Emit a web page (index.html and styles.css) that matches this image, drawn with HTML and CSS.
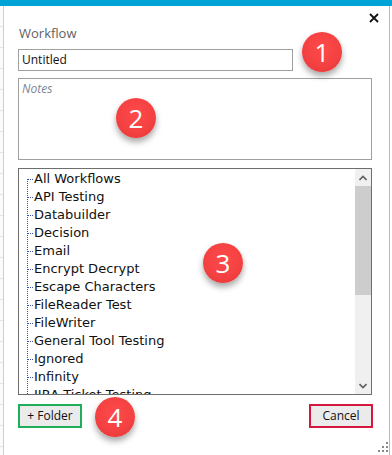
FILE: index.html
```html
<!DOCTYPE html>
<html>
<head>
<meta charset="utf-8">
<link rel="stylesheet" href="styles.css">
</head>
<body>
<div class="screen">
  <div class="topbar"></div>
  <div class="main">
    <div class="gutter"></div>
    <div class="dialog">
      <div class="titlebar">
        <span class="close" aria-label="Close">
          <svg width="10" height="10" viewBox="0 0 10 10"><path d="M1 1 L9 9 M9 1 L1 9" stroke="#111" stroke-width="1.8" fill="none"/></svg>
        </span>
      </div>
      <div class="label">Workflow</div>
      <div class="field name">Untitled</div>
      <div class="field notes"><span class="placeholder">Notes</span></div>
      <div class="tree">
        <ul class="items">
          <li>All Workflows</li>
          <li>API Testing</li>
          <li>Databuilder</li>
          <li>Decision</li>
          <li>Email</li>
          <li>Encrypt Decrypt</li>
          <li>Escape Characters</li>
          <li>FileReader Test</li>
          <li>FileWriter</li>
          <li>General Tool Testing</li>
          <li>Ignored</li>
          <li>Infinity</li>
          <li>JIRA Ticket Testing</li>
        </ul>
        <div class="scrollbar">
          <div class="arrow">
            <svg width="8" height="6" viewBox="0 0 8 6"><path d="M0.5 5 L4 1.5 L7.5 5" stroke="#606060" stroke-width="1.6" fill="none"/></svg>
          </div>
          <div class="track"><div class="thumb"></div></div>
          <div class="arrow">
            <svg width="8" height="6" viewBox="0 0 8 6"><path d="M0.5 1 L4 4.5 L7.5 1" stroke="#606060" stroke-width="1.6" fill="none"/></svg>
          </div>
        </div>
      </div>
      <div class="actions">
        <div class="ring green"><span class="btn">+ Folder</span></div>
        <div class="ring red"><span class="btn">Cancel</span></div>
      </div>
      <div class="footer">
        <div class="grip">
          <i></i><i></i><i></i>
          <i></i><i></i><i></i>
          <i></i><i></i><i></i>
        </div>
      </div>
    </div>
  </div>
  <div class="badge b1">1</div>
  <div class="badge b2">2</div>
  <div class="badge b3">3</div>
  <div class="badge b4">4</div>
</div>
</body>
</html>
```

FILE: styles.css
```css
* { box-sizing: border-box; }
html, body { margin: 0; padding: 0; background: #fff; }
body { font-family: "Open Sans", "Noto Sans", sans-serif; }

.screen {
  position: relative;
  width: 392px;
  height: 455px;
  overflow: hidden;
  display: flex;
  flex-direction: column;
}

.topbar { height: 6px; background: #00a3d6; flex: none; }

.main { flex: 1; display: flex; }

.gutter {
  width: 3px;
  background: repeating-linear-gradient(to bottom, #fbfbfb 0 20px, #e4e4e4 20px 21px);
}

.dialog {
  flex: 1;
  display: flex;
  flex-direction: column;
  border-left: 1px solid #d0d0d0;
  border-right: 1px solid #b8b8b8;
  margin-right: 2px;
  padding-left: 14px;
}

.titlebar {
  height: 17px;
  display: flex;
  justify-content: flex-end;
  align-items: flex-end;
  padding-right: 10px;
}
.close { display: block; width: 10px; height: 10px; }
.close svg { display: block; }

.label {
  font-size: 13px;
  line-height: 18px;
  color: #5f5f5f;
  margin-top: 1px;
  padding-left: 1px;
}

.field {
  border: 1px solid #a0a0a0;
  font-size: 12px;
  padding-left: 3px;
  color: #111;
}
.name {
  margin-top: 7px;
  width: 275px;
  height: 22px;
  line-height: 20px;
}
.notes {
  margin-top: 7px;
  width: 354px;
  height: 82px;
  line-height: 18px;
  padding-top: 1px;
}
.placeholder { font-style: italic; color: #7c8596; }

.tree {
  margin-top: 8px;
  width: 354px;
  height: 227px;
  border: 1px solid #6e6e6e;
  display: flex;
  overflow: hidden;
}
.items {
  flex: 1;
  list-style: none;
  margin: 0;
  padding: 1px 0 0 0;
  position: relative;
  font-family: "DejaVu Sans", Verdana, sans-serif;
  font-size: 13px;
  line-height: 18px;
  color: #111;
  overflow: hidden;
}
.items::before {
  content: "";
  position: absolute;
  left: 8px;
  top: 10px;
  bottom: 0;
  border-left: 1px dotted #3a4fb0;
}
.items li {
  position: relative;
  padding-left: 15px;
  white-space: nowrap;
}
.items li::before {
  content: "";
  position: absolute;
  left: 9px;
  top: 9px;
  width: 5px;
  border-top: 1px dotted #3a4fb0;
}

.scrollbar {
  width: 16px;
  background: #f0f0f0;
  display: flex;
  flex-direction: column;
}
.arrow {
  height: 17px;
  display: flex;
  align-items: center;
  justify-content: center;
}
.arrow svg { display: block; }
.track { flex: 1; }
.thumb { height: 109px; background: #cdcdcd; }

.actions {
  margin-top: 9px;
  width: 355px;
  display: flex;
  justify-content: space-between;
}
.ring {
  width: 64px;
  height: 24px;
  border: 2px solid;
  display: flex;
}
.ring.green { border-color: #1fae5a; }
.ring.red { border-color: #d5173f; }
.btn {
  flex: 1;
  background: #ebebeb;
  font-size: 12px;
  line-height: 20px;
  text-align: center;
  color: #111;
}

.footer {
  flex: 1;
  display: flex;
  justify-content: flex-end;
  align-items: flex-end;
  padding: 0 1px 3px 0;
}
.grip {
  display: grid;
  grid-template-columns: repeat(3, 2px);
  grid-template-rows: repeat(3, 2px);
  gap: 2px;
}
.grip i { background: #8a8a8a; }
.grip i:nth-child(1), .grip i:nth-child(2), .grip i:nth-child(4) { background: transparent; }

.badge {
  position: absolute;
  width: 40px;
  height: 40px;
  border-radius: 50%;
  background: radial-gradient(circle at 50% 40%, #ff4a4a 0%, #f34040 60%, #e23535 100%);
  box-shadow: 0 4px 6px rgba(0, 0, 0, 0.35);
  color: #fff;
  font-family: "Open Sans", "Liberation Sans", sans-serif;
  font-size: 26px;
  line-height: 40px;
  text-align: center;
}
.b1 { left: 302px; top: 32px; }
.b2 { left: 116px; top: 98px; }
.b3 { left: 203px; top: 243px; }
.b4 { left: 95px; top: 397px; }
```
